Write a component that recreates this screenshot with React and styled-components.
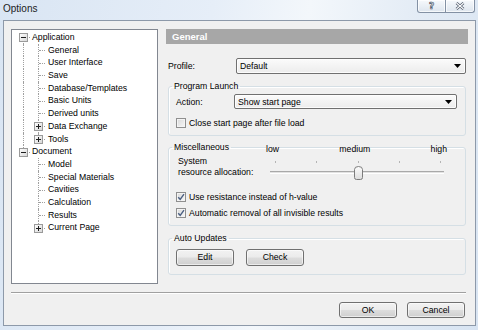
import React from 'react'
import styled, { createGlobalStyle } from 'styled-components'

const UI_FONT = `"Liberation Sans", Arial, sans-serif`

const GlobalStyle = createGlobalStyle`
  html, body {
    margin: 0;
    padding: 0;
    background: #fff;
  }
  body {
    font-family: ${UI_FONT};
  }
`

const Window = styled.div`
  width: 478px;
  height: 330px;
  box-sizing: border-box;
  display: flex;
  flex-direction: column;
  padding: 0 2px 4px 3px;
  background: linear-gradient(100deg, #d9e5f3 0%, #e6eef8 40%, #f3f7fb 58%, #e2ebf5 80%, #d8e4f2 100%);
  font-family: ${UI_FONT};
  font-size: 8.7px;
  color: #000;
`

const TitleBar = styled.div`
  height: 20px;
  flex: none;
  display: flex;
  justify-content: space-between;
  align-items: flex-start;
`

const Title = styled.div`
  padding-top: 3px;
  font-size: 10px;
  color: #1b1b1b;
`

const CaptionGroup = styled.div`
  display: flex;
  margin-right: 1px;
`

const CaptionButton = styled.div`
  width: 29px;
  height: 13px;
  box-sizing: border-box;
  display: flex;
  align-items: center;
  justify-content: center;
  border: 1px solid #8391a4;
  border-top: none;
  border-radius: ${p => (p.$first ? '0 0 0 3px' : '0 0 3px 0')};
  border-left-width: ${p => (p.$first ? '1px' : '0')};
  background: linear-gradient(#f6f9fc, #dde5ee);
  box-shadow: inset 0 0 0 1px rgba(255, 255, 255, 0.7);
`

const HelpGlyph = styled.span`
  font-family: "DejaVu Sans", sans-serif;
  font-weight: bold;
  font-size: 9px;
  line-height: 10px;
  color: #fff;
  -webkit-text-stroke: 0.7px #4a5566;
`

const Body = styled.div`
  flex: 1;
  display: flex;
  flex-direction: column;
  border: 1px solid #8d99a9;
  background: #f0f0f0;
  padding: 8px 7px 7px 7px;
`

const Main = styled.div`
  display: flex;
  gap: 8px;
  height: 255px;
`

const Tree = styled.div`
  width: 147px;
  flex: none;
  box-sizing: border-box;
  border: 1px solid #828790;
  background: #fff;
  padding: 1px 0 0 4px;
`

const TreeRow = styled.div`
  height: 12.7px;
  display: flex;
  align-items: stretch;
`

const Guide = styled.span`
  position: relative;
  flex: none;
  width: 15px;

  &::before {
    content: '';
    position: absolute;
    left: 7px;
    border-left: 1px dotted #a0a0a0;
    top: ${p => (p.$kind === 'first' ? '50%' : '0')};
    bottom: ${p => (p.$kind === 'ell' ? '50%' : '0')};
    display: ${p => (p.$kind === 'blank' ? 'none' : 'block')};
  }

  &::after {
    content: '';
    position: absolute;
    left: 8px;
    right: 1px;
    top: 50%;
    border-top: 1px dotted #a0a0a0;
    display: ${p => (['tee', 'ell', 'first'].includes(p.$kind) ? 'block' : 'none')};
  }
`

const Expander = styled.svg`
  position: absolute;
  left: 3px;
  top: calc(50% - 4px);
  z-index: 1;
`

const TreeLabel = styled.span`
  padding-left: ${p => (p.$root ? '1px' : '2px')};
  line-height: 12.7px;
  white-space: nowrap;
`

const Panel = styled.div`
  width: 302px;
  display: flex;
  flex-direction: column;
`

const Header = styled.div`
  height: 15px;
  display: flex;
  align-items: center;
  padding-left: 6px;
  background: #a7a7a7;
  color: #fff;
  font-weight: bold;
  font-size: 9.5px;
`

const FieldRow = styled.div`
  display: flex;
  align-items: center;
  margin-top: ${p => p.$top || 0}px;
  padding-left: ${p => p.$indent || 0}px;
`

const FieldLabel = styled.span`
  width: ${p => p.$width}px;
  flex: none;
`

const Combo = styled.div`
  width: ${p => p.$width}px;
  height: ${p => p.$height}px;
  box-sizing: border-box;
  display: flex;
  align-items: center;
  justify-content: space-between;
  padding: 0 4px 0 3px;
  border: 1px solid #707070;
  border-radius: 2px;
  background: linear-gradient(#fbfbfb, #ececec);
  box-shadow: inset 0 0 0 1px rgba(255, 255, 255, 0.8);
`

const Group = styled.fieldset`
  margin: ${p => p.$top}px 2px 0 2px;
  padding: ${p => p.$pad};
  border: 1px solid #d5dfe5;
  border-radius: 3px;
  box-shadow: inset 1px 1px 0 #fff;
  min-width: 0;
`

const Legend = styled.legend`
  padding: 0 2px;
  margin-left: -4px;
  line-height: 11px;
`

const CheckRow = styled.label`
  display: flex;
  align-items: center;
  gap: 3px;
  height: ${p => p.$height || 16}px;
  margin-top: ${p => p.$top || 0}px;
`

const CheckBox = styled.span`
  width: 10px;
  height: 10px;
  box-sizing: border-box;
  flex: none;
  display: flex;
  align-items: center;
  justify-content: center;
  border: 1px solid #8f8f8f;
  background: linear-gradient(135deg, #d9d9d9, #f7f7f7);
  box-shadow: inset 0 0 0 1px #f4f4f4;
`

const SliderGrid = styled.div`
  display: grid;
  grid-template-columns: 90px 181px;
  margin-top: -9.5px;
`

const ScaleLabels = styled.div`
  grid-column: 2;
  display: flex;
  justify-content: space-between;
  line-height: 11px;
  span {
    background: #f0f0f0;
  }
`

const SliderLabel = styled.div`
  margin: 1px 0 0 2px;
  line-height: 11px;
`

const Slider = styled.div`
  position: relative;
  margin-top: 1px;
  padding: 0 3px 0 4px;
`

const Ticks = styled.div`
  display: flex;
  justify-content: space-between;
  padding: 0 3px 0 5px;
  margin-top: 5.5px;
  height: 2px;
  span {
    width: 1px;
    height: 2px;
    background: #b4b4b4;
  }
`

const Track = styled.div`
  margin-top: 8px;
  height: 1px;
  border-top: 1px solid #a9a9a9;
  border-bottom: 1px solid #fff;
  background: #e2e2e2;
`

const Thumb = styled.svg`
  position: absolute;
  top: 10px;
`

const ButtonRow = styled.div`
  display: flex;
  gap: ${p => p.$gap}px;
  justify-content: ${p => p.$end ? 'flex-end' : 'flex-start'};
  margin-top: ${p => p.$top || 0}px;
  padding-right: ${p => p.$right || 0}px;
`

const Button = styled.div`
  width: 58px;
  height: ${p => p.$height}px;
  box-sizing: border-box;
  display: flex;
  align-items: center;
  justify-content: center;
  border: 1px solid #707070;
  border-radius: 3px;
  background: linear-gradient(#f2f2f2 0%, #ebebeb 48%, #dddddd 52%, #cfcfcf 100%);
  box-shadow: inset 0 0 0 1px rgba(255, 255, 255, 0.6);
`

const Separator = styled.div`
  margin: 8px 2px 0 0;
  border-top: 1px solid #a0a0a0;
  border-bottom: 1px solid #fff;
`

function ExpandBox({ open }) {
  return (
    <Expander width="9" height="9" viewBox="0 0 9 9">
      <defs>
        <linearGradient id="exg" x1="0" y1="0" x2="1" y2="1">
          <stop offset="0" stopColor="#ffffff" />
          <stop offset="1" stopColor="#d6d6d6" />
        </linearGradient>
      </defs>
      <rect x="0.5" y="0.5" width="8" height="8" fill="url(#exg)" stroke="#9a9a9a" />
      <line x1="2" y1="4.5" x2="7" y2="4.5" stroke="#1e1e1e" />
      {!open && <line x1="4.5" y1="2" x2="4.5" y2="7" stroke="#1e1e1e" />}
    </Expander>
  )
}

function Node({ guides, kind, label, expander, root }) {
  return (
    <TreeRow>
      {guides.map((g, i) => <Guide key={i} $kind={g} />)}
      <Guide $kind={kind}>
        {expander && <ExpandBox open={expander === 'open'} />}
      </Guide>
      <TreeLabel $root={root}>{label}</TreeLabel>
    </TreeRow>
  )
}

const treeData = [
  { label: 'Application', expander: 'open', children: [
    { label: 'General' },
    { label: 'User Interface' },
    { label: 'Save' },
    { label: 'Database/Templates' },
    { label: 'Basic Units' },
    { label: 'Derived units' },
    { label: 'Data Exchange', expander: 'closed' },
    { label: 'Tools', expander: 'closed' },
  ] },
  { label: 'Document', expander: 'open', children: [
    { label: 'Model' },
    { label: 'Special Materials' },
    { label: 'Cavities' },
    { label: 'Calculation' },
    { label: 'Results' },
    { label: 'Current Page', expander: 'closed' },
  ] },
]

function OptionsTree() {
  const rows = []
  treeData.forEach((root, ri) => {
    const lastRoot = ri === treeData.length - 1
    rows.push(
      <Node key={root.label} guides={[]} root
        kind={ri === 0 ? 'first' : lastRoot ? 'ell' : 'tee'}
        label={root.label} expander={root.expander} />
    )
    root.children.forEach((c, ci) => {
      rows.push(
        <Node key={c.label} guides={[lastRoot ? 'blank' : 'line']}
          kind={ci === root.children.length - 1 ? 'ell' : 'tee'}
          label={c.label} expander={c.expander} />
      )
    })
  })
  return <Tree>{rows}</Tree>
}

function DropArrow() {
  return (
    <svg width="7" height="4" viewBox="0 0 7 4">
      <path d="M0 0 H7 L3.5 4 Z" fill="#000" />
    </svg>
  )
}

function Check({ checked }) {
  return (
    <CheckBox>
      {checked && (
        <svg width="8" height="8" viewBox="0 0 8 8">
          <path d="M1.2 4.2 L3.2 6.3 L7 1.2" fill="none" stroke="#4b5f82" strokeWidth="1.4" />
        </svg>
      )}
    </CheckBox>
  )
}

function ResourceSlider({ value, steps }) {
  // track runs 174px, ticks are inset 5px on the left and 3px on the right
  const span = 166
  const left = 4 + 5 + (value / (steps - 1)) * span - 4.5
  return (
    <Slider>
      <Ticks>
        {Array.from({ length: steps }).map((_, i) => <span key={i} />)}
      </Ticks>
      <Track />
      <Thumb width="9" height="14" viewBox="0 0 9 14" style={{ left }}>
        <defs>
          <linearGradient id="thg" x1="0" y1="0" x2="0" y2="1">
            <stop offset="0" stopColor="#fdfdfd" />
            <stop offset="1" stopColor="#dcdcdc" />
          </linearGradient>
        </defs>
        <path d="M0.5 3.5 Q0.5 0.5 4.5 0.5 Q8.5 0.5 8.5 3.5 V11.5 Q8.5 13.5 6.5 13.5 H2.5 Q0.5 13.5 0.5 11.5 Z"
          fill="url(#thg)" stroke="#7c7c7c" />
      </Thumb>
    </Slider>
  )
}

export default function App() {
  return (
    <>
      <GlobalStyle />
      <Window>
        <TitleBar>
          <Title>Options</Title>
          <CaptionGroup>
            <CaptionButton $first><HelpGlyph>?</HelpGlyph></CaptionButton>
            <CaptionButton>
              <svg width="10" height="8" viewBox="0 0 10 8">
                <path d="M1.5 1 L8.5 7 M8.5 1 L1.5 7" stroke="#4a5566" strokeWidth="2.6" />
                <path d="M1.5 1 L8.5 7 M8.5 1 L1.5 7" stroke="#fff" strokeWidth="1.1" />
              </svg>
            </CaptionButton>
          </CaptionGroup>
        </TitleBar>
        <Body>
          <Main>
            <OptionsTree />
            <Panel>
              <Header>General</Header>
              <FieldRow $top={14} $indent={2}>
                <FieldLabel $width={68}>Profile:</FieldLabel>
                <Combo $width={230} $height={16}>
                  <span>Default</span>
                  <DropArrow />
                </Combo>
              </FieldRow>

              <Group $top={7} $pad="2px 8px 6px 7px">
                <Legend>Program Launch</Legend>
                <FieldRow>
                  <FieldLabel $width={58}>Action:</FieldLabel>
                  <Combo $width={223} $height={15}>
                    <span>Show start page</span>
                    <DropArrow />
                  </Combo>
                </FieldRow>
                <CheckRow $top={8} $height={12}>
                  <Check />
                  <span>Close start page after file load</span>
                </CheckRow>
              </Group>

              <Group $top={6} $pad="0 8px 4px 7px">
                <Legend>Miscellaneous</Legend>
                <SliderGrid>
                  <ScaleLabels>
                    <span>low</span>
                    <span>medium</span>
                    <span>high</span>
                  </ScaleLabels>
                  <SliderLabel>System<br />resource allocation:</SliderLabel>
                  <ResourceSlider value={2} steps={5} />
                </SliderGrid>
                <CheckRow $top={11}>
                  <Check checked />
                  <span>Use resistance instead of h-value</span>
                </CheckRow>
                <CheckRow>
                  <Check checked />
                  <span>Automatic removal of all invisible results</span>
                </CheckRow>
              </Group>

              <Group $top={7} $pad="5px 8px 8px 7px">
                <Legend>Auto Updates</Legend>
                <ButtonRow $gap={12}>
                  <Button $height={17}>Edit</Button>
                  <Button $height={17}>Check</Button>
                </ButtonRow>
              </Group>
            </Panel>
          </Main>
          <Separator />
          <ButtonRow $end $gap={10} $top={8} $right={3}>
            <Button $height={16}>OK</Button>
            <Button $height={16}>Cancel</Button>
          </ButtonRow>
        </Body>
      </Window>
    </>
  )
}
